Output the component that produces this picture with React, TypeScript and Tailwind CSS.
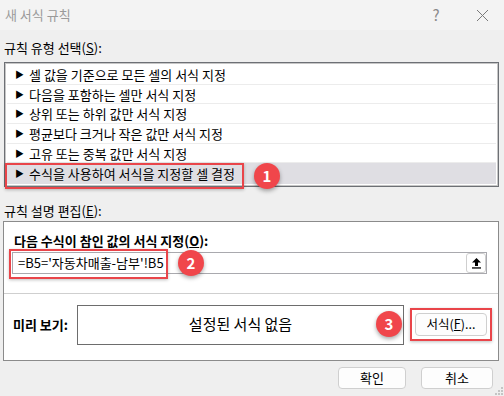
import { useState } from 'react';

// Annotation badge (numbered red circle)
function Badge({ n, className }: { n: number; className: string }) {
  return (
    <div
      className={
        'absolute w-[26px] h-[26px] rounded-full bg-[#f0464b] text-white text-[15px] font-bold flex items-center justify-center shadow-[0_2px_4px_rgba(0,0,0,0.35)] ' +
        className
      }
    >
      {n}
    </div>
  );
}

const rules = [
  '셀 값을 기준으로 모든 셀의 서식 지정',
  '다음을 포함하는 셀만 서식 지정',
  '상위 또는 하위 값만 서식 지정',
  '평균보다 크거나 작은 값만 서식 지정',
  '고유 또는 중복 값만 서식 지정',
  '수식을 사용하여 서식을 지정할 셀 결정',
];

export default function App() {
  const [selected] = useState(5);

  return (
    <div
      className="w-[504px] h-[396px] bg-[#efefef] flex flex-col text-[13px] text-black overflow-hidden relative"
      style={{ fontFamily: '"Noto Sans CJK KR", "Noto Sans", sans-serif' }}
    >
      {/* Title bar */}
      <div className="h-[30px] bg-[#f3f3f3] flex items-center pl-[5px] text-[#9a9a9a] text-[13px]">
        <span>새 서식 규칙</span>
        <span className="ml-auto w-[14px] text-center text-[15px] text-[#8a8a8a]">?</span>
        <svg width="13" height="13" viewBox="0 0 13 13" className="ml-[33px] mr-[15px]">
          <path d="M1 1 L12 12 M12 1 L1 12" stroke="#7a7a7a" strokeWidth="1" />
        </svg>
      </div>

      <div className="flex flex-col px-[4px] pr-[5px]">
        {/* Rule type */}
        <div className="h-[32px] flex items-center pt-[4px]">
          규칙 유형 선택(<u>S</u>):
        </div>

        <div className="relative h-[125px] border border-[#6d7075] shadow-[inset_0_0_0_1px_#c6c6c6] bg-white p-[2px] flex flex-col">
          {rules.map((r, i) => (
            <div
              key={r}
              className={
                'flex items-center gap-[5px] pl-[8px] ' +
                (i === selected
                  ? 'h-[21px] bg-[#dfdee3]'
                  : 'h-[20px] border-b border-[#ececec]')
              }
            >
              <span className="text-[9px] leading-none">▶</span>
              <span className="leading-none">{r}</span>
            </div>
          ))}
          <div className="absolute left-[0px] top-[100px] w-[239px] h-[26px] border-2 border-[#e9454a] shadow-[0_1px_3px_rgba(0,0,0,0.25)]" />
          <Badge n={1} className="left-[249px] top-[100px]" />
        </div>

        {/* Rule description */}
        <div className="h-[34px] flex items-center pt-[14px]">
          규칙 설명 편집(<u>E</u>):
        </div>

        <div className="-ml-[1px] h-[140px] border border-[#8b8b8b] bg-white flex flex-col">
          <div className="font-bold pl-[10px] pt-[7px] h-[30px] flex items-center">
            다음 수식이 참인 값의 서식 지정(<u>O</u>):
          </div>
          <div className="relative mx-[7px] ml-[8px] mr-[11px] h-[22px] border border-[#a9a9ae] flex items-center pl-[5px]">
            <span className="text-[13px]">=B5='자동차매출-남부'!B5</span>
            <div className="ml-auto mr-[0px] w-[20px] h-[20px] rounded-[3px] border border-[#cfcfcf] bg-white flex items-center justify-center">
              <svg width="11" height="12" viewBox="0 0 11 12">
                <path d="M5.5 1 L10 5.5 H7 V9 H4 V5.5 H1 Z" fill="#000" />
                <rect x="1" y="10.3" width="9" height="1.3" fill="#000" />
              </svg>
            </div>
            <div className="absolute -left-[4px] -top-[4px] w-[159px] h-[30px] border-2 border-[#e9454a] shadow-[0_1px_3px_rgba(0,0,0,0.25)]" />
            <Badge n={2} className="left-[165px] -top-[3px]" />
          </div>

          <div className="mt-[19px] border-t border-[#cfcfcf]" />

          <div className="flex items-center h-[65px] pb-[4px]">
            <div className="font-bold pl-[9px] w-[73px]">미리 보기:</div>
            <div className="w-[327px] h-[40px] border border-[#6d6d6d] flex items-center justify-center text-[15px]">
              설정된 서식 없음
            </div>
            <div className="relative ml-[6px] w-[82px] h-[33px] border-2 border-[#e9454a] shadow-[0_1px_3px_rgba(0,0,0,0.25)] flex items-center justify-center">
              <div className="w-[72px] h-[23px] rounded-[4px] border border-[#cfcfcf] bg-[#fdfdfd] flex items-center justify-center text-[12.5px]">
                서식(<u>F</u>)...
              </div>
              <Badge n={3} className="-left-[36px] top-[1px]" />
            </div>
          </div>
        </div>

        {/* Bottom buttons */}
        <div className="flex justify-end gap-[15px] mt-[6px] pr-[6px]">
          <button className="w-[68px] h-[22px] rounded-[4px] border border-[#cfcfcf] bg-[#fdfdfd] text-[13px] flex items-center justify-center">
            확인
          </button>
          <button className="w-[72px] h-[22px] rounded-[4px] border border-[#cfcfcf] bg-[#fdfdfd] text-[13px] flex items-center justify-center">
            취소
          </button>
        </div>
      </div>

      {/* Resize grip */}
      <svg width="10" height="10" viewBox="0 0 10 10" className="absolute right-[1px] bottom-[1px]">
        {[
          [8, 2], [8, 5], [5, 5], [8, 8], [5, 8], [2, 8],
        ].map(([x, y]) => (
          <rect key={`${x}-${y}`} x={x} y={y} width="2" height="2" fill="#c4c4c4" />
        ))}
      </svg>
    </div>
  );
}
